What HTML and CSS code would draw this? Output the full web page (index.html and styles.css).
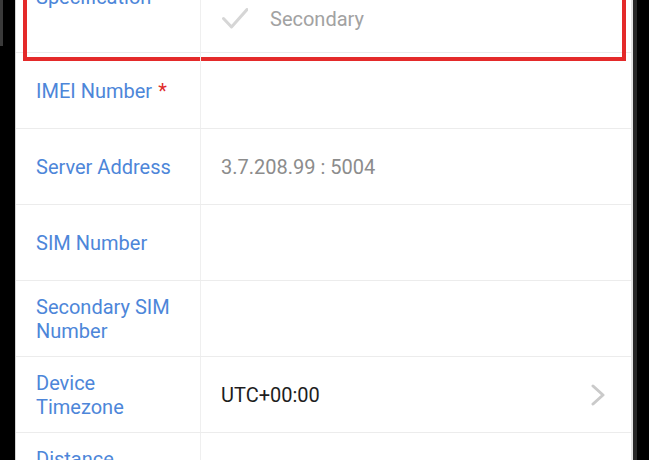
FILE: index.html
```html
<!DOCTYPE html>
<html>
<head>
<meta charset="utf-8">
<link rel="stylesheet" href="styles.css">
</head>
<body>
<div class="phone">
  <div class="bezel-left"><div class="side-button"></div></div>
  <div class="screen">
    <div class="list">
      <div class="row row-spec">
        <div class="label">Specification</div>
        <div class="value options">
          <div class="option"><svg class="check" width="26" height="22" viewBox="0 0 26 22"><path d="M1.5 10.5 L9.5 19 L25 1.5" fill="none" stroke="#d6d6d6" stroke-width="3" stroke-linecap="round" stroke-linejoin="round"/></svg><span>Primary</span></div>
          <div class="option"><svg class="check" width="26" height="22" viewBox="0 0 26 22"><path d="M1.5 10.5 L9.5 19 L25 1.5" fill="none" stroke="#d6d6d6" stroke-width="3" stroke-linecap="round" stroke-linejoin="round"/></svg><span>Secondary</span></div>
        </div>
        <div class="highlight"></div>
      </div>
      <div class="row">
        <div class="label">IMEI Number <span class="req">*</span></div>
        <div class="value"></div>
      </div>
      <div class="row">
        <div class="label">Server Address</div>
        <div class="value muted">3.7.208.99 : 5004</div>
      </div>
      <div class="row">
        <div class="label">SIM Number</div>
        <div class="value"></div>
      </div>
      <div class="row">
        <div class="label">Secondary SIM<br>Number</div>
        <div class="value"></div>
      </div>
      <div class="row">
        <div class="label">Device<br>Timezone</div>
        <div class="value dark">UTC+00:00</div>
        <svg class="chev" width="14" height="22" viewBox="0 0 14 22"><path d="M2 2 L12 11 L2 20" fill="none" stroke="#cacaca" stroke-width="3" stroke-linecap="round" stroke-linejoin="round"/></svg>
      </div>
      <div class="row">
        <div class="label">Distance<br>Unit</div>
        <div class="value muted">Kilometer</div>
        <svg class="chev" width="14" height="22" viewBox="0 0 14 22"><path d="M2 2 L12 11 L2 20" fill="none" stroke="#cacaca" stroke-width="3" stroke-linecap="round" stroke-linejoin="round"/></svg>
      </div>
    </div>
  </div>
  <div class="bezel-right"><div class="edge"></div></div>
</div>
</body>
</html>
```

FILE: styles.css
```css
html, body {
  margin: 0;
  padding: 0;
  background: #000;
  width: 649px;
  height: 460px;
  overflow: hidden;
}

.phone {
  display: flex;
  height: 460px;
  font-family: Roboto, "Noto Sans", sans-serif;
}

.bezel-left {
  width: 15px;
  flex: none;
  background: #000;
}

.side-button {
  width: 3px;
  height: 46px;
  background: #3a3a3a;
}

.screen {
  width: 615px;
  flex: none;
  background: #fff;
  border-left: 1px solid #d4d4d4;
  border-right: 2px solid #e2e2e2;
  overflow: hidden;
}

.bezel-right {
  flex: 1;
  display: flex;
  background: #000;
}

.edge {
  width: 4px;
  background: #262626;
}

.list {
  margin-top: -60px;
}

.row {
  position: relative;
  display: flex;
  align-items: center;
  height: 75px;
  border-bottom: 1px solid #ececec;
}

.label {
  width: 164px;
  flex: none;
  align-self: stretch;
  display: flex;
  align-items: center;
  padding-left: 20px;
  border-right: 1px solid #efefef;
  color: #4d86d9;
  font-size: 20px;
  line-height: 24px;
}

.req {
  color: #e02b2b;
  margin-left: 6px;
}

.value {
  flex: 1;
  padding-left: 20px;
  font-size: 20px;
  line-height: 24px;
}

.muted {
  color: #8c8c8c;
}

.dark {
  color: #1e1e1e;
}

.chev {
  flex: none;
  margin-right: 26px;
}

.row-spec {
  height: 112px;
}

.row-spec .label {
  align-items: flex-start;
  padding-top: 45px;
}

.options {
  align-self: stretch;
  display: flex;
  flex-direction: column;
  gap: 18px;
  padding-top: 25px;
}

.option {
  display: flex;
  align-items: center;
  gap: 22px;
  color: #a2a2a2;
  height: 24px;
}

.check {
  flex: none;
  margin-left: 1px;
}

.highlight {
  position: absolute;
  left: 7px;
  right: 5px;
  top: 30px;
  bottom: -9px;
  border: 4px solid #e42a2a;
  pointer-events: none;
}
```
